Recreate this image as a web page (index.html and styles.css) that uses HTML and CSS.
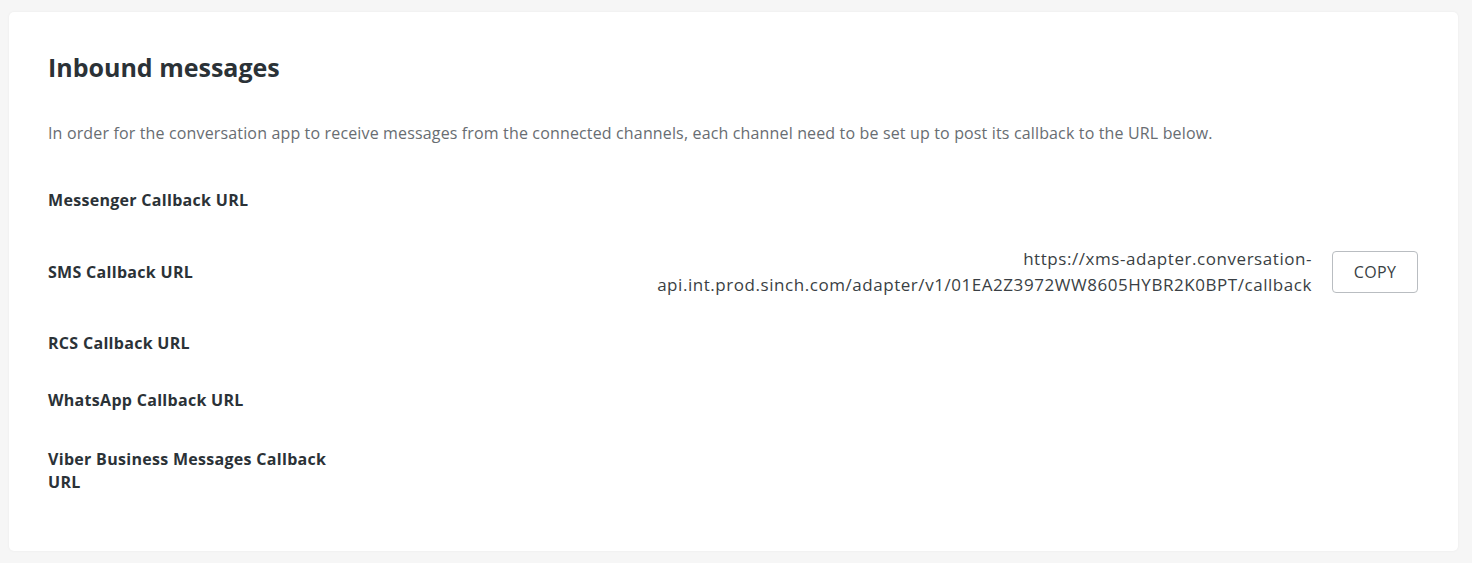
FILE: index.html
```html
<!DOCTYPE html>
<html>
<head>
<meta charset="utf-8">
<link rel="stylesheet" href="styles.css">
</head>
<body>
<div class="card">
  <h2 class="title">Inbound messages</h2>
  <p class="desc">In order for the conversation app to receive messages from the connected channels, each channel need to be set up to post its callback to the URL below.</p>
  <div class="rows">
    <div class="row"><div class="label">Messenger Callback URL</div></div>
    <div class="row">
      <div class="label">SMS Callback URL</div>
      <div class="value">
        <span class="url">https://xms-adapter.conversation-api.int.prod.sinch.com/adapter/v1/01EA2Z3972WW8605HYBR2K0BPT/callback</span>
        <button class="copy">COPY</button>
      </div>
    </div>
    <div class="row"><div class="label">RCS Callback URL</div></div>
    <div class="row"><div class="label">WhatsApp Callback URL</div></div>
    <div class="row"><div class="label">Viber Business Messages Callback URL</div></div>
  </div>
</div>
</body>
</html>
```

FILE: styles.css
```css
html, body {
  margin: 0;
  padding: 0;
}
body {
  background: #f6f6f6;
  font-family: "Open Sans", "Liberation Sans", sans-serif;
  padding: 12px 14px 12px 9px;
  box-sizing: border-box;
  height: 563px;
}
.card {
  background: #fff;
  border-radius: 5px;
  box-shadow: 0 0 3px rgba(0,0,0,0.05);
  padding: 39px 40px 38px 39px;
  height: 539px;
  box-sizing: border-box;
}
.title {
  margin: 0;
  font-size: 25px;
  line-height: 32px;
  font-weight: 700;
  color: #2b3237;
}
.desc {
  margin: 38px 0 0;
  font-size: 16px;
  line-height: 24px;
  letter-spacing: 0.15px;
  color: #686d72;
}
.rows {
  margin-top: 44px;
  display: flex;
  flex-direction: column;
  gap: 34px;
}
.row {
  display: flex;
  align-items: center;
}
.label {
  width: 290px;
  flex: none;
  font-size: 16px;
  line-height: 23px;
  font-weight: 700;
  letter-spacing: 0.3px;
  color: #2b3237;
}
.row:last-child .label {
  padding-top: 2px;
}
.value {
  flex: 1;
  display: flex;
  align-items: center;
  justify-content: flex-end;
  gap: 20px;
}
.url {
  width: 700px;
  text-align: right;
  font-size: 17px;
  line-height: 26px;
  letter-spacing: 0.55px;
  color: #3a3f44;
}
.copy {
  flex: none;
  width: 86px;
  height: 42px;
  border: 1px solid #b9bdc1;
  border-radius: 4px;
  background: #fff;
  font-family: "Open Sans", "Liberation Sans", sans-serif;
  font-size: 16px;
  color: #3a3f44;
  letter-spacing: 0.3px;
}
```
